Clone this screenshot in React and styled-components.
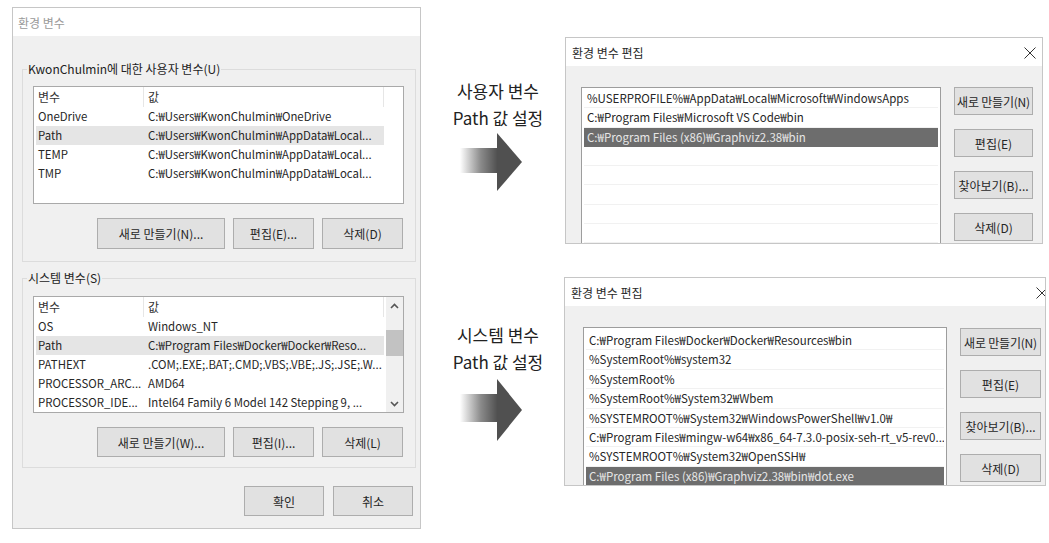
import React from "react";
import styled, { createGlobalStyle } from "styled-components";

const GlobalStyle = createGlobalStyle`
  html, body { margin: 0; padding: 0; background: #ffffff; }
  body { font-family: "Noto Sans CJK KR", "Noto Sans", sans-serif; color: #222; }
  * { box-sizing: border-box; }
`;

const Page = styled.div`
  width: 1049px;
  height: 543px;
  padding: 7px 0 0 12px;
  display: flex;
  align-items: flex-start;
  overflow: hidden;
  background: #fff;
`;

const Dialog = styled.div`
  width: ${(p) => p.$w}px;
  height: ${(p) => (p.$h ? `${p.$h}px` : "auto")};
  margin-top: ${(p) => p.$mt || 0}px;
  margin-left: ${(p) => p.$ml || 0}px;
  border: 1px solid #c6c6c6;
  background: #f0f0f0;
  display: flex;
  flex-direction: column;
  overflow: hidden;
  flex: none;
`;

const TitleBar = styled.div`
  height: 28px;
  flex: none;
  background: #fff;
  display: flex;
  align-items: center;
  justify-content: space-between;
  padding: 0 ${(p) => p.$pr || 6}px 0 ${(p) => p.$pl || 6}px;
  font-size: 12px;
  color: ${(p) => (p.$inactive ? "#9a9a9a" : "#2a2a2a")};
`;

const CloseBtn = styled.span`
  display: flex;
  width: 12px;
  height: 12px;
  margin-right: ${(p) => p.$mr || 0}px;
  margin-top: 1px;
`;

const MainBody = styled.div`
  padding: 25px 4px 12px 9px;
  display: flex;
  flex-direction: column;
`;

const GroupBox = styled.fieldset`
  margin: ${(p) => p.$mt || 0}px 0 0 0;
  border: 1px solid #dcdcdc;
  padding: ${(p) => p.$pt}px 11px ${(p) => p.$pb}px 10px;
  min-width: 0;
`;

const GroupLabel = styled.legend`
  padding: 0 1px;
  margin-left: -6px;
  font-size: 12px;
  line-height: 16px;
  color: #222;
`;

const ListView = styled.div`
  height: ${(p) => p.$h}px;
  border: 1px solid #a9a9a9;
  background: #fff;
  display: flex;
  overflow: hidden;
`;

const ListContent = styled.div`
  flex: 1;
  padding-left: 2px;
  font-size: 11.4px;
  min-width: 0;
`;

const HeaderRow = styled.div`
  display: grid;
  grid-template-columns: 108px 240px 1fr;
  height: 20px;
  font-size: 12px;
`;

const HeaderCell = styled.div`
  padding-left: ${(p) => p.$pl}px;
  line-height: 20px;
  color: #333;
  border-right: ${(p) => (p.$last ? "none" : "1px solid #e6e6e6")};
`;

const Row = styled.div`
  display: grid;
  grid-template-columns: 108px 240px;
  width: 348px;
  height: 19px;
  line-height: 19px;
  background: ${(p) => (p.$selected ? "#e5e5e5" : "transparent")};
`;

const Cell = styled.div`
  padding-left: ${(p) => p.$pl}px;
  white-space: nowrap;
  overflow: hidden;
  color: #262626;
`;

const ScrollBar = styled.div`
  width: 17px;
  flex: none;
  background: #f0f0f0;
  display: flex;
  flex-direction: column;
`;

const ScrollArrow = styled.div`
  height: 17px;
  display: flex;
  align-items: center;
  justify-content: center;
`;

const ScrollTrack = styled.div`
  flex: 1;
  padding-top: 16px;
`;

const Thumb = styled.div`
  height: 26px;
  background: #c2c2c2;
`;

const ButtonRow = styled.div`
  display: flex;
  justify-content: flex-end;
  gap: ${(p) => p.$gap || 8}px;
  margin-top: ${(p) => p.$mt}px;
  padding-right: ${(p) => p.$pr || 0}px;
`;

const Button = styled.button`
  width: ${(p) => p.$w}px;
  height: ${(p) => p.$h || 31}px;
  background: #e1e1e1;
  border: 1px solid #adadad;
  font-family: inherit;
  font-size: 12px;
  color: #262626;
  padding: 0;
  white-space: nowrap;
  letter-spacing: ${(p) => p.$ls || 0}px;
`;

const Middle = styled.div`
  width: 144px;
  flex: none;
  padding: 70px 0 0 31px;
  display: flex;
  flex-direction: column;
  align-items: flex-start;
`;

const Caption = styled.div`
  width: 92px;
  margin-top: ${(p) => p.$mt || 0}px;
  text-align: center;
  font-size: 17px;
  line-height: 27px;
  color: #222;
  white-space: nowrap;
`;

const ArrowBox = styled.svg`
  margin-top: ${(p) => p.$mt}px;
  margin-left: 8px;
  display: block;
`;

const RightColumn = styled.div`
  display: flex;
  flex-direction: column;
`;

const EditBody = styled.div`
  flex: 1;
  min-height: 0;
  display: flex;
  gap: 13px;
  padding: 21px 0 0 ${(p) => p.$pl}px;
`;

const EditList = styled.div`
  width: ${(p) => p.$w}px;
  flex: none;
  border: 1px solid #9d9d9d;
  border-bottom: none;
  background: #fff;
  padding: ${(p) => p.$pt}px 2px 0 2px;
  overflow: hidden;
`;

const EditRow = styled.div`
  height: ${(p) => p.$h}px;
  line-height: ${(p) => p.$h}px;
  padding-left: 3px;
  font-size: 11.5px;
  white-space: nowrap;
  overflow: hidden;
  background: ${(p) => (p.$selected ? "#6d6d6d" : "#fff")};
  color: ${(p) => (p.$selected ? "#e6e6e6" : "#262626")};
  border-bottom: 1px solid ${(p) => (p.$selected ? "#6d6d6d" : "#f1f1f1")};
`;

const EditButtons = styled.div`
  display: flex;
  flex-direction: column;
  gap: 14px;
  padding-top: ${(p) => p.$pt || 0}px;
`;

const Chevron = ({ up }) => (
  <svg width="9" height="6" viewBox="0 0 9 6">
    <polyline
      points={up ? "1,5 4.5,1.5 8,5" : "1,1 4.5,4.5 8,1"}
      fill="none"
      stroke="#555"
      strokeWidth="1.6"
    />
  </svg>
);

const CloseIcon = () => (
  <svg width="12" height="12" viewBox="0 0 12 12">
    <path d="M0.5 0.5 L11.5 11.5 M11.5 0.5 L0.5 11.5" stroke="#333" strokeWidth="1" fill="none" />
  </svg>
);

const Arrow = ({ id, h, bodyTop, bodyH, mt }) => (
  <ArrowBox $mt={mt} width="62" height={h} viewBox={`0 0 62 ${h}`}>
    <defs>
      <linearGradient id={id} x1="0" y1="0" x2="1" y2="0">
        <stop offset="0" stopColor="#ffffff" />
        <stop offset="0.55" stopColor="#8a8a8a" />
        <stop offset="1" stopColor="#4e4e4e" />
      </linearGradient>
    </defs>
    <rect x="0" y={bodyTop} width="38" height={bodyH} fill={`url(#${id})`} />
    <polygon points={`37,0 62,${h / 2} 37,${h}`} fill="#505050" />
  </ArrowBox>
);

const userVars = [
  ["OneDrive", "C:₩Users₩KwonChulmin₩OneDrive"],
  ["Path", "C:₩Users₩KwonChulmin₩AppData₩Local..."],
  ["TEMP", "C:₩Users₩KwonChulmin₩AppData₩Local..."],
  ["TMP", "C:₩Users₩KwonChulmin₩AppData₩Local..."],
];

const sysVars = [
  ["OS", "Windows_NT"],
  ["Path", "C:₩Program Files₩Docker₩Docker₩Reso..."],
  ["PATHEXT", ".COM;.EXE;.BAT;.CMD;.VBS;.VBE;.JS;.JSE;.W..."],
  ["PROCESSOR_ARC...", "AMD64"],
  ["PROCESSOR_IDE...", "Intel64 Family 6 Model 142 Stepping 9, ..."],
];

const userPaths = [
  "%USERPROFILE%₩AppData₩Local₩Microsoft₩WindowsApps",
  "C:₩Program Files₩Microsoft VS Code₩bin",
  "C:₩Program Files (x86)₩Graphviz2.38₩bin",
  "",
  "",
  "",
  "",
  "",
  "",
];

const sysPaths = [
  "C:₩Program Files₩Docker₩Docker₩Resources₩bin",
  "%SystemRoot%₩system32",
  "%SystemRoot%",
  "%SystemRoot%₩System32₩Wbem",
  "%SYSTEMROOT%₩System32₩WindowsPowerShell₩v1.0₩",
  "C:₩Program Files₩mingw-w64₩x86_64-7.3.0-posix-seh-rt_v5-rev0...",
  "%SYSTEMROOT%₩System32₩OpenSSH₩",
  "C:₩Program Files (x86)₩Graphviz2.38₩bin₩dot.exe",
];

function VarList({ rows, height, selected, scroll }) {
  return (
    <ListView $h={height}>
      <ListContent>
        <HeaderRow>
          <HeaderCell $pl={2}>변수</HeaderCell>
          <HeaderCell $pl={4}>값</HeaderCell>
          <HeaderCell $last />
        </HeaderRow>
        {rows.map(([k, v], i) => (
          <Row key={k + i} $selected={i === selected}>
            <Cell $pl={2}>{k}</Cell>
            <Cell $pl={4}>{v}</Cell>
          </Row>
        ))}
      </ListContent>
      {scroll && (
        <ScrollBar>
          <ScrollArrow>
            <Chevron up />
          </ScrollArrow>
          <ScrollTrack>
            <Thumb />
          </ScrollTrack>
          <ScrollArrow>
            <Chevron />
          </ScrollArrow>
        </ScrollBar>
      )}
    </ListView>
  );
}

function EditDialog({ w, h, mt, ml, listW, listPl, listPt, rowH, paths, selected, btnW, closeMr, btnPt }) {
  return (
    <Dialog $w={w} $h={h} $mt={mt} $ml={ml}>
      <TitleBar $pl={6} $pr={6}>
        <span>환경 변수 편집</span>
        <CloseBtn $mr={closeMr}>
          <CloseIcon />
        </CloseBtn>
      </TitleBar>
      <EditBody $pl={listPl}>
        <EditList $w={listW} $pt={listPt}>
          {paths.map((p, i) => (
            <EditRow key={i} $h={rowH} $selected={i === selected}>
              {p}
            </EditRow>
          ))}
        </EditList>
        <EditButtons $pt={btnPt}>
          <Button $w={btnW} $h={28} $ls={-0.2}>새로 만들기(N)</Button>
          <Button $w={btnW} $h={28}>편집(E)</Button>
          <Button $w={btnW} $h={28}>찾아보기(B)...</Button>
          <Button $w={btnW} $h={28}>삭제(D)</Button>
        </EditButtons>
      </EditBody>
    </Dialog>
  );
}

export default function App() {
  return (
    <>
      <GlobalStyle />
      <Page>
        <Dialog $w={409}>
          <TitleBar $inactive $pl={5}>
            <span>환경 변수</span>
          </TitleBar>
          <MainBody>
            <GroupBox $pt={9} $pb={12}>
              <GroupLabel>KwonChulmin에 대한 사용자 변수(U)</GroupLabel>
              <VarList rows={userVars} height={118} selected={1} />
              <ButtonRow $mt={14} $pr={1}>
                <Button $w={128}>새로 만들기(N)...</Button>
                <Button $w={81}>편집(E)...</Button>
                <Button $w={81}>삭제(D)</Button>
              </ButtonRow>
            </GroupBox>
            <GroupBox $mt={8} $pt={10} $pb={10}>
              <GroupLabel>시스템 변수(S)</GroupLabel>
              <VarList rows={sysVars} height={117} selected={1} scroll />
              <ButtonRow $mt={14} $pr={1}>
                <Button $w={128} $h={30}>새로 만들기(W)...</Button>
                <Button $w={81} $h={30}>편집(I)...</Button>
                <Button $w={81} $h={30}>삭제(L)</Button>
              </ButtonRow>
            </GroupBox>
            <ButtonRow $mt={18} $gap={9} $pr={3}>
              <Button $w={80} $h={30}>확인</Button>
              <Button $w={80} $h={30}>취소</Button>
            </ButtonRow>
          </MainBody>
        </Dialog>

        <Middle>
          <Caption>
            사용자 변수
            <br />
            Path 값 설정
          </Caption>
          <Arrow id="g1" h={58} bodyTop={15} bodyH={25} mt={2} />
          <Caption $mt={130}>
            시스템 변수
            <br />
            Path 값 설정
          </Caption>
          <Arrow id="g2" h={62} bodyTop={15} bodyH={28} mt={4} />
        </Middle>

        <RightColumn>
          <EditDialog
            w={478}
            h={207}
            mt={30}
            ml={0}
            listW={360}
            listPl={15}
            listPt={1}
            rowH={19.3}
            paths={userPaths}
            selected={2}
            btnW={79}
            closeMr={0}
            btnPt={0}
          />
          <EditDialog
            w={482}
            h={209}
            mt={33}
            ml={-1}
            listW={364}
            listPl={18}
            listPt={3}
            rowH={19.4}
            paths={sysPaths}
            selected={7}
            btnW={81}
            closeMr={-9}
            btnPt={1}
          />
        </RightColumn>
      </Page>
    </>
  );
}
